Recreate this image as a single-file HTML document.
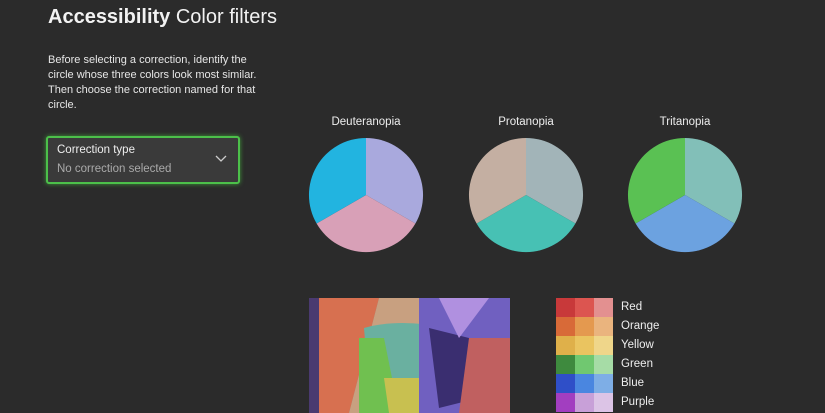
<!DOCTYPE html>
<html><head><style>
body{margin:0;width:825px;height:413px;background:#2b2b2b;font-family:"Liberation Sans",sans-serif;color:#eee;position:relative;overflow:hidden}
.a{position:absolute}
</style></head><body>
<div class="a" style="left:48px;top:6px;font-size:20px;color:#f2f2f2"><b>Accessibility</b> Color filters</div>
<div class="a" style="left:48px;top:53px;font-size:11px;line-height:15px;color:#e6e6e6;width:222px">Before selecting a correction, identify the circle whose three colors look most similar. Then choose the correction named for that circle.</div>
<div class="a" style="left:46px;top:136px;width:190px;height:44px;border:2px solid #4cc04a;border-radius:3px;background:#3a3a3a;box-shadow:0 0 5px #3f9a3a"></div>
<div class="a" style="left:57px;top:144px;font-size:11.5px;color:#eee">Correction type</div>
<div class="a" style="left:57px;top:163px;font-size:11.5px;color:#aaa">No correction selected</div>
<svg class="a" style="left:215px;top:155px" width="12" height="8"><path d="M1 1L6 6L11 1" stroke="#ccc" fill="none" stroke-width="1.3"/></svg>
<div class="a" style="left:316px;top:116px;width:100px;text-align:center;font-size:11.5px">Deuteranopia</div>
<div class="a" style="left:476px;top:116px;width:100px;text-align:center;font-size:11.5px">Protanopia</div>
<div class="a" style="left:635px;top:116px;width:100px;text-align:center;font-size:11.5px">Tritanopia</div>
<svg class="a" style="left:0;top:0" width="825" height="413">
<g transform="translate(366,195)"><path d="M0 0V-57A57 57 0 0 1 49.4 28.5Z" fill="#a9a9dd"/><path d="M0 0L49.4 28.5A57 57 0 0 1 -49.4 28.5Z" fill="#d8a0b7"/><path d="M0 0L-49.4 28.5A57 57 0 0 1 0 -57Z" fill="#22b4e0"/></g>
<g transform="translate(526,195)"><path d="M0 0V-57A57 57 0 0 1 49.4 28.5Z" fill="#a2b4b8"/><path d="M0 0L49.4 28.5A57 57 0 0 1 -49.4 28.5Z" fill="#47c1b4"/><path d="M0 0L-49.4 28.5A57 57 0 0 1 0 -57Z" fill="#c4afa2"/></g>
<g transform="translate(685,195)"><path d="M0 0V-57A57 57 0 0 1 49.4 28.5Z" fill="#82bfb8"/><path d="M0 0L49.4 28.5A57 57 0 0 1 -49.4 28.5Z" fill="#6ca2e0"/><path d="M0 0L-49.4 28.5A57 57 0 0 1 0 -57Z" fill="#5ac153"/></g>
<g transform="translate(309,298)">
<rect width="201" height="115" fill="#8a6a70"/>
<path d="M0 0H40L10 115H0Z" fill="#4a3a70"/>
<path d="M10 0H70L40 115H10Z" fill="#d77050"/>
<path d="M70 0H130L95 115H40Z" fill="#c8a080"/>
<path d="M55 30Q90 20 140 30L150 90Q100 110 60 90Z" fill="#6ab0a0"/>
<path d="M50 40L75 40L90 115H50Z" fill="#70c050"/>
<path d="M75 80H120L130 115H80Z" fill="#c8c050"/>
<path d="M110 0H201V50L160 115H110Z" fill="#7060c0"/>
<path d="M120 30L160 40L170 100L130 110Z" fill="#3a2e70"/>
<path d="M160 40H201V115H150Z" fill="#c06060"/>
<path d="M130 0H180L150 40Z" fill="#b090e0"/>
</g>
<g transform="translate(556,298)">
<rect x="0" y="0" width="19" height="19" fill="#c8393a"/><rect x="19" y="0" width="19" height="19" fill="#dc5550"/><rect x="38" y="0" width="19" height="19" fill="#e39090"/>
<rect x="0" y="19" width="19" height="19" fill="#d86a38"/><rect x="19" y="19" width="19" height="19" fill="#e4994f"/><rect x="38" y="19" width="19" height="19" fill="#eab47e"/>
<rect x="0" y="38" width="19" height="19" fill="#dfb04a"/><rect x="19" y="38" width="19" height="19" fill="#eac460"/><rect x="38" y="38" width="19" height="19" fill="#efd68a"/>
<rect x="0" y="57" width="19" height="19" fill="#3e8a3e"/><rect x="19" y="57" width="19" height="19" fill="#70c870"/><rect x="38" y="57" width="19" height="19" fill="#a6dca6"/>
<rect x="0" y="76" width="19" height="19" fill="#2f4fc8"/><rect x="19" y="76" width="19" height="19" fill="#4a86e0"/><rect x="38" y="76" width="19" height="19" fill="#7eaee6"/>
<rect x="0" y="95" width="19" height="19" fill="#a23ec0"/><rect x="19" y="95" width="19" height="19" fill="#c8a0d8"/><rect x="38" y="95" width="19" height="19" fill="#dcc4e6"/>
</g>
</svg>
<div class="a" style="left:621px;top:298px;font-size:11.5px;line-height:19px;color:#eee">Red<br>Orange<br>Yellow<br>Green<br>Blue<br>Purple</div>
</body></html>
